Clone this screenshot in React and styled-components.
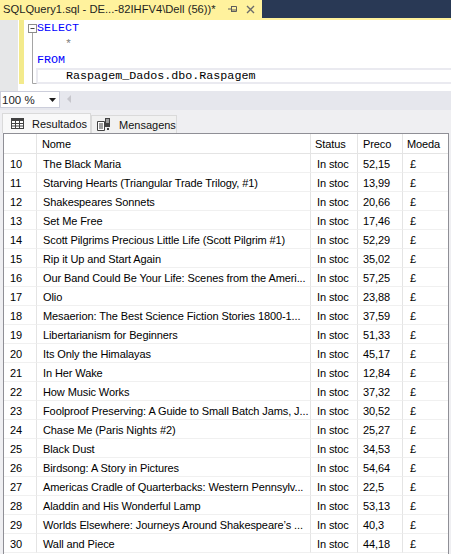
import React from "react";
import styled, { createGlobalStyle } from "styled-components";

const Global = createGlobalStyle`
  html, body { margin: 0; padding: 0; background: #eeeef2; }
  body { width: 451px; height: 554px; overflow: hidden; font-family: "Liberation Sans", Arial, sans-serif; }
  * { box-sizing: border-box; }
`;

const Page = styled.div`
  width: 451px;
  height: 554px;
  display: flex;
  flex-direction: column;
  background: #eeeef2;
`;

const TitleBar = styled.div`
  height: 18px;
  display: flex;
  background: #293955;
  flex: none;
`;

const TitleTab = styled.div`
  width: 262px;
  background: #fff29d;
  display: flex;
  align-items: center;
  padding-left: 3px;
  font-size: 11.2px;
  color: #1e1e1e;
  white-space: nowrap;
`;

const TitleText = styled.span`
  flex: 1;
`;

const TabIcon = styled.span`
  width: 16px;
  height: 18px;
  display: flex;
  align-items: center;
  justify-content: center;
  margin-right: ${(p) => p.$mr || 0}px;
`;

const YellowLine = styled.div`
  height: 2px;
  background: #fff29d;
  flex: none;
`;

const Editor = styled.div`
  height: 71px;
  display: flex;
  background: #fff;
  flex: none;
`;

const Gutter = styled.div`
  width: 18px;
  background: #e6e7e8;
`;

const ChangeCol = styled.div`
  width: 7px;
  padding: 0 1px 0 1px;
  display: flex;
  flex-direction: column;
`;

const ChangeBar = styled.div`
  height: 64px;
  width: 5px;
  background: #f3ea8c;
`;

const Outline = styled.div`
  width: 12px;
  position: relative;
`;

const Code = styled.div`
  flex: 1;
  font-family: "Liberation Mono", "DejaVu Sans Mono", monospace;
  font-size: 11.7px;
`;

const Line = styled.div`
  height: 16px;
  line-height: 14px;
  display: flex;
  align-items: center;
  white-space: pre;
  color: ${(p) => p.$color || "#000"};
  ${(p) =>
    p.$current &&
    `border: 2px solid #eaeaf0; border-right: none; margin-left: -1px; padding-left: 0px;`}
`;

const Toolbar = styled.div`
  height: 19px;
  display: flex;
  align-items: flex-start;
  background: #e6e7ed;
  flex: none;
`;

const Combo = styled.div`
  width: 60px;
  height: 17px;
  background: #fff;
  border: 1px solid #cccedb;
  display: flex;
  align-items: center;
  justify-content: space-between;
  padding: 0 3px 0 1px;
  font-size: 11.5px;
  color: #1e1e1e;
`;

const ScrollArrow = styled.div`
  margin: 4px 0 0 7px;
  width: 0;
  height: 0;
  border-top: 4px solid transparent;
  border-bottom: 4px solid transparent;
  border-right: 4px solid #c6c6cc;
`;

const Results = styled.div`
  flex: 1;
  display: flex;
  flex-direction: column;
  padding: 3px 2px 0 2px;
  background: #efeff2;
`;

const Tabs = styled.div`
  display: flex;
  align-items: flex-end;
  height: 20px;
`;

const Tab = styled.div`
  height: ${(p) => (p.$active ? 20 : 18)}px;
  width: ${(p) => p.$w}px;
  display: flex;
  align-items: center;
  gap: 8px;
  padding-left: ${(p) => p.$pl}px;
  background: ${(p) => (p.$active ? "#f9f9f9" : "#f1f1f1")};
  border: 1px solid #dadada;
  border-bottom: none;
  font-size: 11px;
  color: #111;
`;

const Grid = styled.div`
  margin-left: 1px;
  width: 446px;
  flex: 1;
  background: #fff;
  border: 1px solid #8f8f96;
  border-bottom: none;
  display: grid;
  grid-template-columns: 33px 274px 47px 45px 45px;
  grid-auto-rows: 19px;
  grid-template-rows: 20px;
  align-content: start;
  font-size: 11px;
  letter-spacing: -0.1px;
  color: #000;
`;

const Cell = styled.div`
  border-right: 1px solid #e4e4e4;
  border-bottom: 1px solid ${(p) => (p.$head ? "#e4e4e4" : "#f0f0f0")};
  display: flex;
  align-items: center;
  padding-left: ${(p) => p.$pl ?? 6}px;
  padding-top: 1px;
  white-space: nowrap;
  overflow: hidden;
  &:nth-child(5n) { border-right: none; }
`;

const rows = [
  [10, "The Black Maria", "52,15"],
  [11, "Starving Hearts (Triangular Trade Trilogy, #1)", "13,99"],
  [12, "Shakespeares Sonnets", "20,66"],
  [13, "Set Me Free", "17,46"],
  [14, "Scott Pilgrims Precious Little Life (Scott Pilgrim #1)", "52,29"],
  [15, "Rip it Up and Start Again", "35,02"],
  [16, "Our Band Could Be Your Life: Scenes from the Ameri...", "57,25"],
  [17, "Olio", "23,88"],
  [18, "Mesaerion: The Best Science Fiction Stories 1800-1...", "37,59"],
  [19, "Libertarianism for Beginners", "51,33"],
  [20, "Its Only the Himalayas", "45,17"],
  [21, "In Her Wake", "12,84"],
  [22, "How Music Works", "37,32"],
  [23, "Foolproof Preserving: A Guide to Small Batch Jams, J...", "30,52"],
  [24, "Chase Me (Paris Nights #2)", "25,27"],
  [25, "Black Dust", "34,53"],
  [26, "Birdsong: A Story in Pictures", "54,64"],
  [27, "Americas Cradle of Quarterbacks: Western Pennsylv...", "22,5"],
  [28, "Aladdin and His Wonderful Lamp", "53,13"],
  [29, "Worlds Elsewhere: Journeys Around Shakespeare\u2019s ...", "40,3"],
  [30, "Wall and Piece", "44,18"],
];

const PinIcon = () => (
  <svg width="10" height="8" viewBox="0 0 10 8">
    <path d="M0 4h3M3.5 1v6M3.5 1.5h5v5h-5M3.5 5h5" stroke="#5d5d5d" strokeWidth="1" fill="none" />
  </svg>
);

const CloseIcon = () => (
  <svg width="9" height="9" viewBox="0 0 9 9">
    <path d="M1 1L8 8M8 1L1 8" stroke="#6b6b6b" strokeWidth="1.4" />
  </svg>
);

const OutlineDrawing = () => (
  <svg width="12" height="66" viewBox="0 0 12 66" style={{ position: "absolute", left: 2, top: 0 }}>
    <rect x="1.5" y="4.5" width="8" height="8" fill="#fff" stroke="#8c8c8c" />
    <path d="M3.5 8.5h4" stroke="#444" />
    <path d="M5.5 13v50.5h4" stroke="#a5a5a5" fill="none" />
  </svg>
);

const GridIcon = () => (
  <svg width="13" height="11" viewBox="0 0 13 11">
    <rect x="0.5" y="0.5" width="12" height="10" fill="#fff" stroke="#424242" />
    <rect x="0.5" y="0.5" width="12" height="2.5" fill="#424242" />
    <path d="M0.5 5.5h12M0.5 8h12M4.5 0.5v10M8.5 0.5v10" stroke="#424242" />
  </svg>
);

const MsgIcon = () => (
  <svg width="14" height="13" viewBox="0 0 14 13">
    <path d="M0.5 3.5h7v9h-7z" fill="#fff" stroke="#424242" />
    <path d="M2 6h4M2 8h4M2 10h4" stroke="#424242" />
    <rect x="8" y="0" width="5" height="9" fill="#424242" />
    <path d="M9 2h3M9 4h3" stroke="#fff" />
    <rect x="10" y="10" width="2" height="2" fill="#424242" />
  </svg>
);

const ArrowDown = () => (
  <svg width="7" height="4" viewBox="0 0 7 4">
    <path d="M0 0h7L3.5 4z" fill="#1e1e1e" />
  </svg>
);

export default function App() {
  return (
    <Page>
      <Global />
      <TitleBar>
        <TitleTab>
          <TitleText>SQLQuery1.sql - DE...-82IHFV4\Dell (56))*</TitleText>
          <TabIcon $mr={1}><PinIcon /></TabIcon>
          <TabIcon $mr={4}><CloseIcon /></TabIcon>
        </TitleTab>
      </TitleBar>
      <YellowLine />
      <Editor>
        <Gutter />
        <ChangeCol><ChangeBar /></ChangeCol>
        <Outline><OutlineDrawing /></Outline>
        <Code>
          <Line $color="#0000ff">SELECT</Line>
          <Line $color="#808080">{"    *"}</Line>
          <Line $color="#0000ff">FROM</Line>
          <Line $current>{"    Raspagem_Dados.dbo.Raspagem"}</Line>
        </Code>
      </Editor>
      <Toolbar>
        <Combo>
          <span>100 %</span>
          <ArrowDown />
        </Combo>
        <ScrollArrow />
      </Toolbar>
      <Results>
        <Tabs>
          <Tab $active $w={89} $pl={8}><GridIcon />Resultados</Tab>
          <Tab $w={86} $pl={5}><MsgIcon />Mensagens</Tab>
        </Tabs>
        <Grid>
          <Cell $head />
          <Cell $head $pl={5}>Nome</Cell>
          <Cell $head $pl={4}>Status</Cell>
          <Cell $head $pl={5}>Preco</Cell>
          <Cell $head $pl={4}>Moeda</Cell>
          {rows.map(([n, name, price]) => (
            <React.Fragment key={n}>
              <Cell $pl={6}>{n}</Cell>
              <Cell $pl={6}>{name}</Cell>
              <Cell $pl={6}>In stoc</Cell>
              <Cell $pl={5}>{price}</Cell>
              <Cell $pl={7}>£</Cell>
            </React.Fragment>
          ))}
        </Grid>
      </Results>
    </Page>
  );
}
